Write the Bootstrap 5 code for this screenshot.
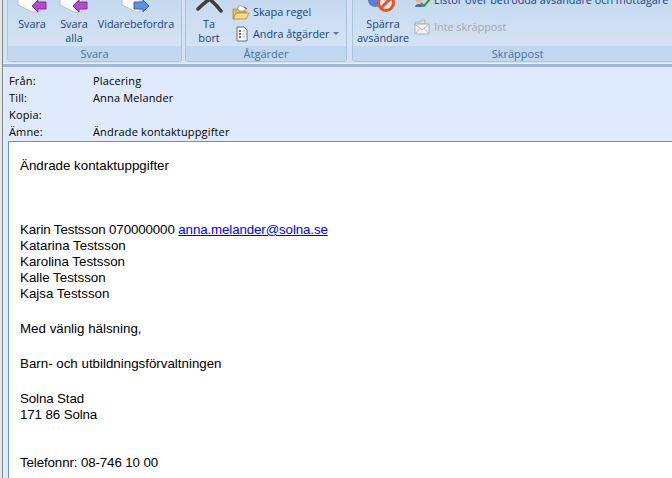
<!DOCTYPE html>
<html lang="sv">
<head>
<meta charset="UTF-8">
<title>Ändrade kontaktuppgifter</title>
<link href="https://cdn.jsdelivr.net/npm/bootstrap@5.3.0/dist/css/bootstrap.min.css" rel="stylesheet">
<style>
html, body { height: 100%; }
body { background: #fff; overflow: hidden; font-family: "Liberation Sans", Arial, sans-serif; color: #000; }
.mail-window { width: 672px; height: 478px; background: #dfebfc; }
.edge-left { width: 3px; flex: none; background: #e8e8e0; border-right: 1px solid #7c8a96; }
.ribbon { height: 67px; flex: none; padding-left: 4px; background: #d3e2f4; border-bottom: 3px solid #a3b8d6; box-shadow: inset 0 -1px 0 #e6f2fb; }
.rib-group { height: 62px; flex: none; border: 1px solid #aac4e0; border-top: 0; border-radius: 0 0 4px 4px; background: linear-gradient(#c5d9ef, #d9e7f7); overflow: hidden; }
.group-reply { width: 175px; margin-right: 3px; }
.group-act { width: 162px; margin-right: 5px; }
.group-junk { width: 330px; border-right: 0; }
.rib-body { height: 46px; }
.rib-label { height: 15px; background: #c2d8f0; font: 11px/15px "Open Sans", sans-serif; color: #4a6ea5; text-align: center; }
.rib-btn { font: 10.8px/13.5px "Open Sans", sans-serif; color: #15428b; text-align: center; flex: none; }
.rib-btn svg { display: block; margin: 0 auto; }
.rib-row { font: 10.8px/14px "Open Sans", sans-serif; color: #15428b; white-space: nowrap; }
.rib-row svg { flex: none; margin-right: 3px; }
.rib-stack { padding-top: 4px; gap: 6px; }
.rib-off { color: #a3a9b2; }
.rib-cut { margin-top: -7px; margin-bottom: 12px; }
.drop-caret { display: inline-block; margin: 0 0 2px 4px; border: 3px solid transparent; border-top-color: #5b7399; border-bottom: 0; }
.w-reply { width: 48px; }
.w-all { width: 36px; }
.w-fwd { width: 88px; }
.w-del { width: 46px; }
.w-block { width: 60px; }
.head-rows { padding: 5px 0 0 6px; height: 74px; flex: none; font: 11px/17px "Open Sans", sans-serif; letter-spacing: .15px; }
.head-key { width: 84px; flex: none; }
.mail-body { background: #fff; border-top: 1px solid #6f93c0; border-left: 1px solid #6f93c0; margin-left: 5px; flex: 1; padding: 16px 0 0 11px; font: 13.33px/16px "Liberation Sans", Arial, sans-serif; }
.mail-body a { color: #0000ee; }
.line-tight { letter-spacing: -.12px; }
.gap-a { height: 48px; }
.gap-b { height: 19px; }
.gap-c { height: 32px; }
</style>
</head>
<body>
<div class="mail-window d-flex">
  <div class="edge-left"></div>
  <div class="flex-grow-1 d-flex flex-column overflow-hidden">
    <div class="ribbon d-flex">
      <div class="rib-group group-reply">
        <div class="rib-body d-flex">
          <div class="rib-btn w-reply">
            <svg width="48" height="17" viewBox="0 0 48 17"><path d="M10 -2V5L24 12H32V-2Z" fill="#fbfbfb" stroke="#b9c0cc"/><path d="M24 6L30 0V2H38V9H30V12Z" fill="#b04cc8" stroke="#8a2aa6"/></svg>
            Svara
          </div>
          <div class="rib-btn w-all">
            <svg width="36" height="17" viewBox="0 0 36 17"><path d="M4 -2V5L18 12H26V-2Z" fill="#fbfbfb" stroke="#b9c0cc"/><path d="M17 6L23 0V2H31V9H23V12Z" fill="#b04cc8" stroke="#8a2aa6"/></svg>
            Svara<br>alla
          </div>
          <div class="rib-btn w-fwd">
            <svg width="88" height="17" viewBox="0 0 88 17"><path d="M30 -2V5L44 12H48V-2Z" fill="#fbfbfb" stroke="#b9c0cc"/><path d="M57 6L51 0V2H42V9H51V12Z" fill="#5f8fe0" stroke="#3a66b4"/></svg>
            Vidarebefordra
          </div>
        </div>
        <div class="rib-label">Svara</div>
      </div>
      <div class="rib-group group-act">
        <div class="rib-body d-flex">
          <div class="rib-btn w-del">
            <svg width="46" height="17" viewBox="0 0 46 17"><path d="M25 -2Q19 2 12 9" fill="none" stroke="#3f3f42" stroke-width="3.500" stroke-linecap="round"/><path d="M22 -2Q29 3 35 11" fill="none" stroke="#3f3f42" stroke-width="3.500" stroke-linecap="round"/></svg>
            Ta<br>bort
          </div>
          <div class="d-flex flex-column rib-stack">
            <div class="rib-row d-flex align-items-center">
              <svg width="18" height="16" viewBox="0 0 18 16"><path d="M7 1L14 4L11 9L5 6Z" fill="#fff" stroke="#8a8fa0" stroke-width=".7"/><path d="M12 3L15 5" stroke="#c8504a" stroke-width="1.500"/><path d="M1 5H6L7 7H14V9H5L3 15H1Z" fill="#e8b84c" stroke="#a8813a" stroke-width=".7"/><path d="M4 9H17L14 15H1.500Z" fill="#f8dc84" stroke="#a8813a" stroke-width=".7"/></svg>
              Skapa regel
            </div>
            <div class="rib-row d-flex align-items-center">
              <svg width="18" height="16" viewBox="0 0 18 16"><path d="M5 1H12L15 4V15H5Z" fill="#fff" stroke="#5f6c80"/><path d="M7 5H9M7 8H9M7 11H9" stroke="#303a4c" stroke-width="1.300"/><path d="M10.500 5H13M10.500 8H13M10.500 11H13" stroke="#9aa4b4"/></svg>
              Andra åtgärder<span class="drop-caret"></span>
            </div>
          </div>
        </div>
        <div class="rib-label">Åtgärder</div>
      </div>
      <div class="rib-group group-junk">
        <div class="rib-body d-flex">
          <div class="rib-btn w-block">
            <svg width="60" height="17" viewBox="0 0 60 17"><circle cx="22" cy="0" r="7" fill="#5a7fd0"/><circle cx="33" cy="3" r="7.500" fill="#f4e8e0" stroke="#e0562c" stroke-width="3"/><path d="M28 8L38 -2" stroke="#e0562c" stroke-width="3"/></svg>
            Spärra<br>avsändare
          </div>
          <div class="d-flex flex-column">
            <div class="rib-row rib-cut d-flex align-items-center">
              <svg width="18" height="14" viewBox="0 0 18 14"><circle cx="6" cy="7" r="3" fill="#e0b890"/><path d="M2 14C2 10 10 10 10 14Z" fill="#4a68b8"/><path d="M8 10L11 13L17 6" fill="none" stroke="#3c9a34" stroke-width="2"/></svg>
              Listor över betrodda avsändare och mottagare
            </div>
            <div class="rib-row rib-off d-flex align-items-center">
              <svg width="18" height="16" viewBox="0 0 18 16"><path d="M2 3H7L8 1H12V5H2Z" fill="#d5dde6" stroke="#b0b8c0"/><path d="M2 5H16V15H2Z" fill="#eef2f6" stroke="#aab2ba"/><path d="M2 5L9 11L16 5M2 15L7 9M16 15L11 9" fill="none" stroke="#b4bcc4"/></svg>
              Inte skräppost
            </div>
          </div>
        </div>
        <div class="rib-label">Skräppost</div>
      </div>
    </div>
    <div class="head-rows">
      <div class="d-flex"><div class="head-key">Från:</div><div>Placering</div></div>
      <div class="d-flex"><div class="head-key">Till:</div><div>Anna Melander</div></div>
      <div class="d-flex"><div class="head-key">Kopia:</div><div></div></div>
      <div class="d-flex"><div class="head-key">Ämne:</div><div>Ändrade kontaktuppgifter</div></div>
    </div>
    <div class="mail-body">
      <div>Ändrade kontaktuppgifter</div>
      <div class="gap-a"></div>
      <div class="line-tight">Karin Testsson 070000000 <a href="#">anna.melander@solna.se</a></div>
      <div>Katarina Testsson</div>
      <div>Karolina Testsson</div>
      <div>Kalle Testsson</div>
      <div>Kajsa Testsson</div>
      <div class="gap-b"></div>
      <div>Med vänlig hälsning,</div>
      <div class="gap-b"></div>
      <div>Barn- och utbildningsförvaltningen</div>
      <div class="gap-b"></div>
      <div class="line-tight">Solna Stad</div>
      <div class="line-tight">171 86 Solna</div>
      <div class="gap-c"></div>
      <div class="line-tight">Telefonnr: 08-746 10 00</div>
    </div>
  </div>
</div>
<script src="https://cdn.jsdelivr.net/npm/bootstrap@5.3.0/dist/js/bootstrap.bundle.min.js"></script>
</body>
</html>
